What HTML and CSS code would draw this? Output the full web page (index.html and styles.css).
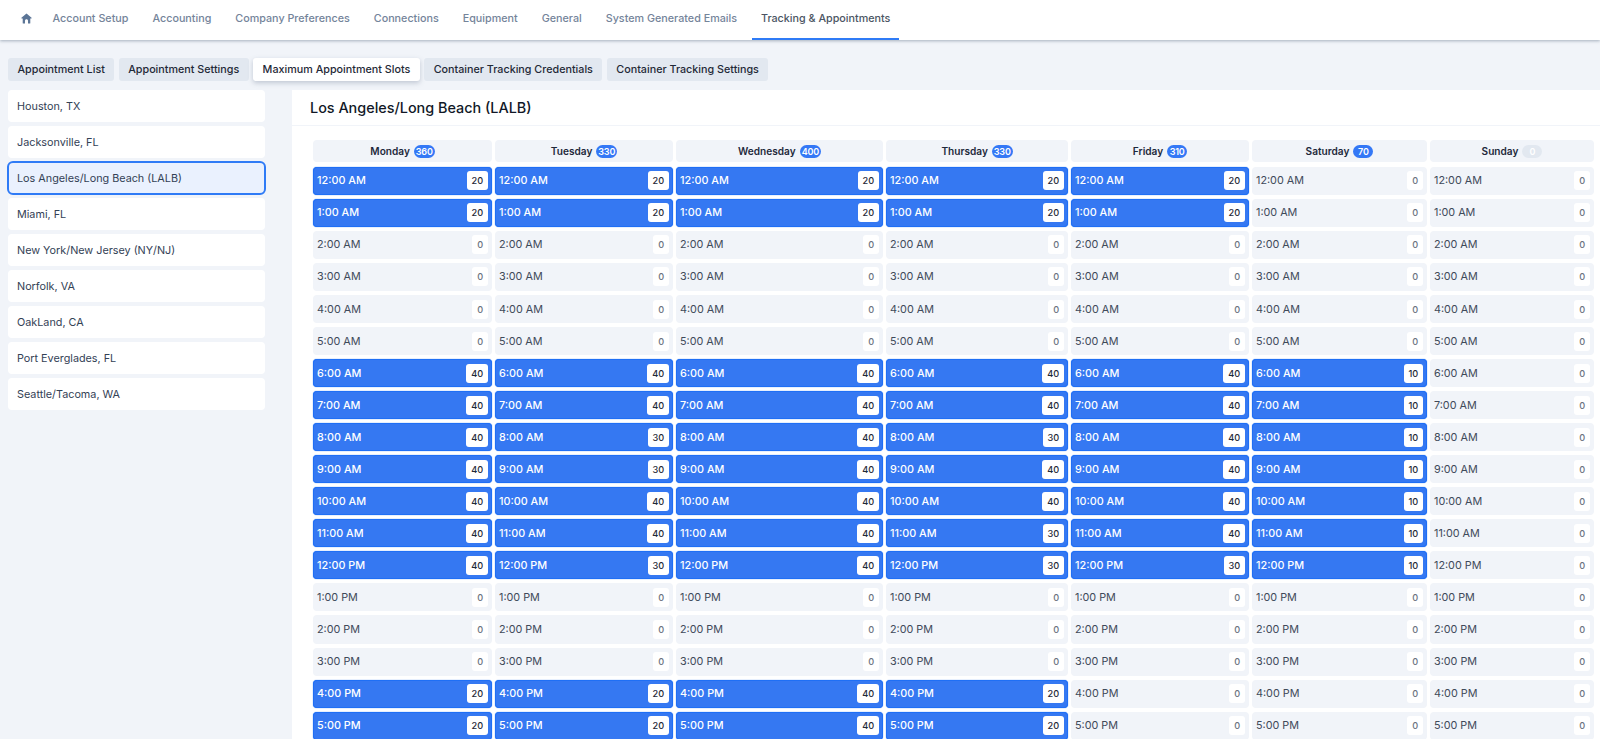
FILE: index.html
```html
<!DOCTYPE html>
<html lang="en">
<head>
<meta charset="utf-8">
<title>Maximum Appointment Slots</title>
<link rel="stylesheet" href="styles.css">
</head>
<body>
<nav class="topbar">
  <a class="top home"><svg viewBox="0 0 24 24" width="13" height="13"><path fill="currentColor" d="M12 2.600 2.600 10.800c-.5.500-.2 1.200.5 1.200H5v8.200c0 .6.400 1 1 1h3.200v-5c0-1.600 1.200-2.900 2.800-2.900s2.800 1.300 2.800 2.900v5H18c.6 0 1-.4 1-1V12h1.900c.7 0 1-.7.500-1.200z"/></svg></a>
  <a class="top">Account Setup</a>
  <a class="top">Accounting</a>
  <a class="top">Company Preferences</a>
  <a class="top">Connections</a>
  <a class="top">Equipment</a>
  <a class="top">General</a>
  <a class="top">System Generated Emails</a>
  <a class="top active">Tracking &amp; Appointments</a>
</nav>
<div class="subtabs">
  <a class="sub">Appointment List</a>
  <a class="sub">Appointment Settings</a>
  <a class="sub active">Maximum Appointment Slots</a>
  <a class="sub">Container Tracking Credentials</a>
  <a class="sub">Container Tracking Settings</a>
</div>
<main class="layout">
  <aside class="ports">
    <a class="port">Houston, TX</a>
    <a class="port">Jacksonville, FL</a>
    <a class="port selected">Los Angeles/Long Beach (LALB)</a>
    <a class="port">Miami, FL</a>
    <a class="port">New York/New Jersey (NY/NJ)</a>
    <a class="port">Norfolk, VA</a>
    <a class="port">OakLand, CA</a>
    <a class="port">Port Everglades, FL</a>
    <a class="port">Seattle/Tacoma, WA</a>
  </aside>
  <section class="panel">
    <h2 class="panel-title">Los Angeles/Long Beach (LALB)</h2>
    <div class="week">
      <div class="day">
        <div class="day-head">Monday <span class="count">360</span></div>
        <div class="slot on"><span>12:00 AM</span><b>20</b></div>
        <div class="slot on"><span>1:00 AM</span><b>20</b></div>
        <div class="slot"><span>2:00 AM</span><b>0</b></div>
        <div class="slot"><span>3:00 AM</span><b>0</b></div>
        <div class="slot"><span>4:00 AM</span><b>0</b></div>
        <div class="slot"><span>5:00 AM</span><b>0</b></div>
        <div class="slot on"><span>6:00 AM</span><b>40</b></div>
        <div class="slot on"><span>7:00 AM</span><b>40</b></div>
        <div class="slot on"><span>8:00 AM</span><b>40</b></div>
        <div class="slot on"><span>9:00 AM</span><b>40</b></div>
        <div class="slot on"><span>10:00 AM</span><b>40</b></div>
        <div class="slot on"><span>11:00 AM</span><b>40</b></div>
        <div class="slot on"><span>12:00 PM</span><b>40</b></div>
        <div class="slot"><span>1:00 PM</span><b>0</b></div>
        <div class="slot"><span>2:00 PM</span><b>0</b></div>
        <div class="slot"><span>3:00 PM</span><b>0</b></div>
        <div class="slot on"><span>4:00 PM</span><b>20</b></div>
        <div class="slot on"><span>5:00 PM</span><b>20</b></div>
      </div>
      <div class="day">
        <div class="day-head">Tuesday <span class="count">330</span></div>
        <div class="slot on"><span>12:00 AM</span><b>20</b></div>
        <div class="slot on"><span>1:00 AM</span><b>20</b></div>
        <div class="slot"><span>2:00 AM</span><b>0</b></div>
        <div class="slot"><span>3:00 AM</span><b>0</b></div>
        <div class="slot"><span>4:00 AM</span><b>0</b></div>
        <div class="slot"><span>5:00 AM</span><b>0</b></div>
        <div class="slot on"><span>6:00 AM</span><b>40</b></div>
        <div class="slot on"><span>7:00 AM</span><b>40</b></div>
        <div class="slot on"><span>8:00 AM</span><b>30</b></div>
        <div class="slot on"><span>9:00 AM</span><b>30</b></div>
        <div class="slot on"><span>10:00 AM</span><b>40</b></div>
        <div class="slot on"><span>11:00 AM</span><b>40</b></div>
        <div class="slot on"><span>12:00 PM</span><b>30</b></div>
        <div class="slot"><span>1:00 PM</span><b>0</b></div>
        <div class="slot"><span>2:00 PM</span><b>0</b></div>
        <div class="slot"><span>3:00 PM</span><b>0</b></div>
        <div class="slot on"><span>4:00 PM</span><b>20</b></div>
        <div class="slot on"><span>5:00 PM</span><b>20</b></div>
      </div>
      <div class="day">
        <div class="day-head">Wednesday <span class="count">400</span></div>
        <div class="slot on"><span>12:00 AM</span><b>20</b></div>
        <div class="slot on"><span>1:00 AM</span><b>20</b></div>
        <div class="slot"><span>2:00 AM</span><b>0</b></div>
        <div class="slot"><span>3:00 AM</span><b>0</b></div>
        <div class="slot"><span>4:00 AM</span><b>0</b></div>
        <div class="slot"><span>5:00 AM</span><b>0</b></div>
        <div class="slot on"><span>6:00 AM</span><b>40</b></div>
        <div class="slot on"><span>7:00 AM</span><b>40</b></div>
        <div class="slot on"><span>8:00 AM</span><b>40</b></div>
        <div class="slot on"><span>9:00 AM</span><b>40</b></div>
        <div class="slot on"><span>10:00 AM</span><b>40</b></div>
        <div class="slot on"><span>11:00 AM</span><b>40</b></div>
        <div class="slot on"><span>12:00 PM</span><b>40</b></div>
        <div class="slot"><span>1:00 PM</span><b>0</b></div>
        <div class="slot"><span>2:00 PM</span><b>0</b></div>
        <div class="slot"><span>3:00 PM</span><b>0</b></div>
        <div class="slot on"><span>4:00 PM</span><b>40</b></div>
        <div class="slot on"><span>5:00 PM</span><b>40</b></div>
      </div>
      <div class="day">
        <div class="day-head">Thursday <span class="count">330</span></div>
        <div class="slot on"><span>12:00 AM</span><b>20</b></div>
        <div class="slot on"><span>1:00 AM</span><b>20</b></div>
        <div class="slot"><span>2:00 AM</span><b>0</b></div>
        <div class="slot"><span>3:00 AM</span><b>0</b></div>
        <div class="slot"><span>4:00 AM</span><b>0</b></div>
        <div class="slot"><span>5:00 AM</span><b>0</b></div>
        <div class="slot on"><span>6:00 AM</span><b>40</b></div>
        <div class="slot on"><span>7:00 AM</span><b>40</b></div>
        <div class="slot on"><span>8:00 AM</span><b>30</b></div>
        <div class="slot on"><span>9:00 AM</span><b>40</b></div>
        <div class="slot on"><span>10:00 AM</span><b>40</b></div>
        <div class="slot on"><span>11:00 AM</span><b>30</b></div>
        <div class="slot on"><span>12:00 PM</span><b>30</b></div>
        <div class="slot"><span>1:00 PM</span><b>0</b></div>
        <div class="slot"><span>2:00 PM</span><b>0</b></div>
        <div class="slot"><span>3:00 PM</span><b>0</b></div>
        <div class="slot on"><span>4:00 PM</span><b>20</b></div>
        <div class="slot on"><span>5:00 PM</span><b>20</b></div>
      </div>
      <div class="day">
        <div class="day-head">Friday <span class="count">310</span></div>
        <div class="slot on"><span>12:00 AM</span><b>20</b></div>
        <div class="slot on"><span>1:00 AM</span><b>20</b></div>
        <div class="slot"><span>2:00 AM</span><b>0</b></div>
        <div class="slot"><span>3:00 AM</span><b>0</b></div>
        <div class="slot"><span>4:00 AM</span><b>0</b></div>
        <div class="slot"><span>5:00 AM</span><b>0</b></div>
        <div class="slot on"><span>6:00 AM</span><b>40</b></div>
        <div class="slot on"><span>7:00 AM</span><b>40</b></div>
        <div class="slot on"><span>8:00 AM</span><b>40</b></div>
        <div class="slot on"><span>9:00 AM</span><b>40</b></div>
        <div class="slot on"><span>10:00 AM</span><b>40</b></div>
        <div class="slot on"><span>11:00 AM</span><b>40</b></div>
        <div class="slot on"><span>12:00 PM</span><b>30</b></div>
        <div class="slot"><span>1:00 PM</span><b>0</b></div>
        <div class="slot"><span>2:00 PM</span><b>0</b></div>
        <div class="slot"><span>3:00 PM</span><b>0</b></div>
        <div class="slot"><span>4:00 PM</span><b>0</b></div>
        <div class="slot"><span>5:00 PM</span><b>0</b></div>
      </div>
      <div class="day">
        <div class="day-head">Saturday <span class="count">70</span></div>
        <div class="slot"><span>12:00 AM</span><b>0</b></div>
        <div class="slot"><span>1:00 AM</span><b>0</b></div>
        <div class="slot"><span>2:00 AM</span><b>0</b></div>
        <div class="slot"><span>3:00 AM</span><b>0</b></div>
        <div class="slot"><span>4:00 AM</span><b>0</b></div>
        <div class="slot"><span>5:00 AM</span><b>0</b></div>
        <div class="slot on"><span>6:00 AM</span><b>10</b></div>
        <div class="slot on"><span>7:00 AM</span><b>10</b></div>
        <div class="slot on"><span>8:00 AM</span><b>10</b></div>
        <div class="slot on"><span>9:00 AM</span><b>10</b></div>
        <div class="slot on"><span>10:00 AM</span><b>10</b></div>
        <div class="slot on"><span>11:00 AM</span><b>10</b></div>
        <div class="slot on"><span>12:00 PM</span><b>10</b></div>
        <div class="slot"><span>1:00 PM</span><b>0</b></div>
        <div class="slot"><span>2:00 PM</span><b>0</b></div>
        <div class="slot"><span>3:00 PM</span><b>0</b></div>
        <div class="slot"><span>4:00 PM</span><b>0</b></div>
        <div class="slot"><span>5:00 PM</span><b>0</b></div>
      </div>
      <div class="day">
        <div class="day-head">Sunday <span class="count none">0</span></div>
        <div class="slot"><span>12:00 AM</span><b>0</b></div>
        <div class="slot"><span>1:00 AM</span><b>0</b></div>
        <div class="slot"><span>2:00 AM</span><b>0</b></div>
        <div class="slot"><span>3:00 AM</span><b>0</b></div>
        <div class="slot"><span>4:00 AM</span><b>0</b></div>
        <div class="slot"><span>5:00 AM</span><b>0</b></div>
        <div class="slot"><span>6:00 AM</span><b>0</b></div>
        <div class="slot"><span>7:00 AM</span><b>0</b></div>
        <div class="slot"><span>8:00 AM</span><b>0</b></div>
        <div class="slot"><span>9:00 AM</span><b>0</b></div>
        <div class="slot"><span>10:00 AM</span><b>0</b></div>
        <div class="slot"><span>11:00 AM</span><b>0</b></div>
        <div class="slot"><span>12:00 PM</span><b>0</b></div>
        <div class="slot"><span>1:00 PM</span><b>0</b></div>
        <div class="slot"><span>2:00 PM</span><b>0</b></div>
        <div class="slot"><span>3:00 PM</span><b>0</b></div>
        <div class="slot"><span>4:00 PM</span><b>0</b></div>
        <div class="slot"><span>5:00 PM</span><b>0</b></div>
      </div>
    </div>
  </section>
</main>
</body>
</html>
```
FILE: styles.css
```css
* { box-sizing: border-box; }
html, body { height: 100%; }
body {
  margin: 0;
  height: 739px;
  overflow: hidden;
  background: #f1f4f9;
  color: #1e293b;
  font-family: Inter, "Liberation Sans", sans-serif;
  font-size: 10.8px;
}
h2 { margin: 0; }

.topbar {
  display: flex;
  align-items: stretch;
  gap: 6px;
  height: 40px;
  padding-left: 12px;
  background: #fff;
  box-shadow: 0 1px 3px rgba(100, 116, 139, .55);
}
.top {
  display: flex;
  align-items: center;
  padding: 0 9px 2px;
  color: #74849a;
  font-size: 10.750px;
  font-weight: 500;
  border-bottom: 2px solid transparent;
  white-space: nowrap;
}
.top.home { color: #5b7596; padding-left: 7.500px; padding-right: 5px; }
.top.active { color: #4b5563; border-bottom-color: #2f7bf6; }

.subtabs {
  display: flex;
  gap: 4.400px;
  padding: 18px 8px 9px;
}
.sub {
  height: 23px;
  line-height: 23px;
  padding: 0 9.500px;
  border-radius: 3px;
  background: #e2e8f0;
  color: #1f2937;
  font-size: 10.750px;
  font-weight: 500;
  white-space: nowrap;
}
.sub.active { background: #fff; box-shadow: 0 2px 5px rgba(100, 116, 139, .35); }

.layout { display: flex; align-items: flex-start; gap: 27px; padding-left: 8px; }
.ports {
  display: flex;
  flex-direction: column;
  gap: 4px;
  flex: 0 0 257px;
}
.port {
  display: flex;
  align-items: center;
  height: 32px;
  padding: 0 9px;
  border-radius: 4px;
  background: #fff;
  color: #334155;
}
.port.selected {
  margin: -1px -1px;
  height: 34px;
  padding: 0 8px;
  border: 2px solid #2f7bf6;
  border-radius: 6px;
  background: #eaf1fe;
}

.panel { flex: 1; background: #fff; min-height: 660px; }
.panel-title {
  height: 36px;
  padding: 0 18px;
  line-height: 36px;
  font-size: 14.400px;
  font-weight: 500;
  color: #111827;
  border-bottom: 1px solid #f1f4f9;
}
.week {
  display: grid;
  grid-template-columns: 179px 178px 207px 182px 178px 175px 164px;
  gap: 3px;
  padding: 14px 6px 0 21px;
}
.day { display: flex; flex-direction: column; gap: 4px; }
.day-head {
  display: flex;
  align-items: center;
  justify-content: center;
  gap: 4px;
  height: 22px;
  margin-bottom: .8px;
  border-radius: 4px;
  background: #f1f4f9;
  font-size: 10.100px;
  font-weight: 600;
  color: #1e293b;
}
.count {
  min-width: 20px;
  height: 13px;
  line-height: 13px;
  padding: 0 2px;
  border-radius: 7px;
  background: #3478f6;
  color: #fff;
  font-size: 9px;
  font-weight: 600;
  letter-spacing: -.2px;
  text-align: center;
}
.count.none { background: #e2e8f0; }

.slot {
  display: flex;
  align-items: center;
  justify-content: space-between;
  height: 28.050px;
  padding: 0 4px;
  border-radius: 4px;
  background: #f1f4f9;
  color: #3f4a5a;
  font-size: 10.800px;
}
.slot b {
  height: 19px;
  line-height: 19px;
  padding: 0 4.800px;
  border-radius: 3px;
  background: #fff;
  color: #6b7280;
  font-size: 9.200px;
  font-weight: 500;
  text-align: center;
}
.slot.on {
  background: #3578f2;
  box-shadow: inset 0 0 0 1px #1f6ff5, 0 0 0 1px rgba(52, 120, 246, .12);
  color: #fff;
  font-weight: 500;
}
.slot.on b { color: #1f2937; }
```
